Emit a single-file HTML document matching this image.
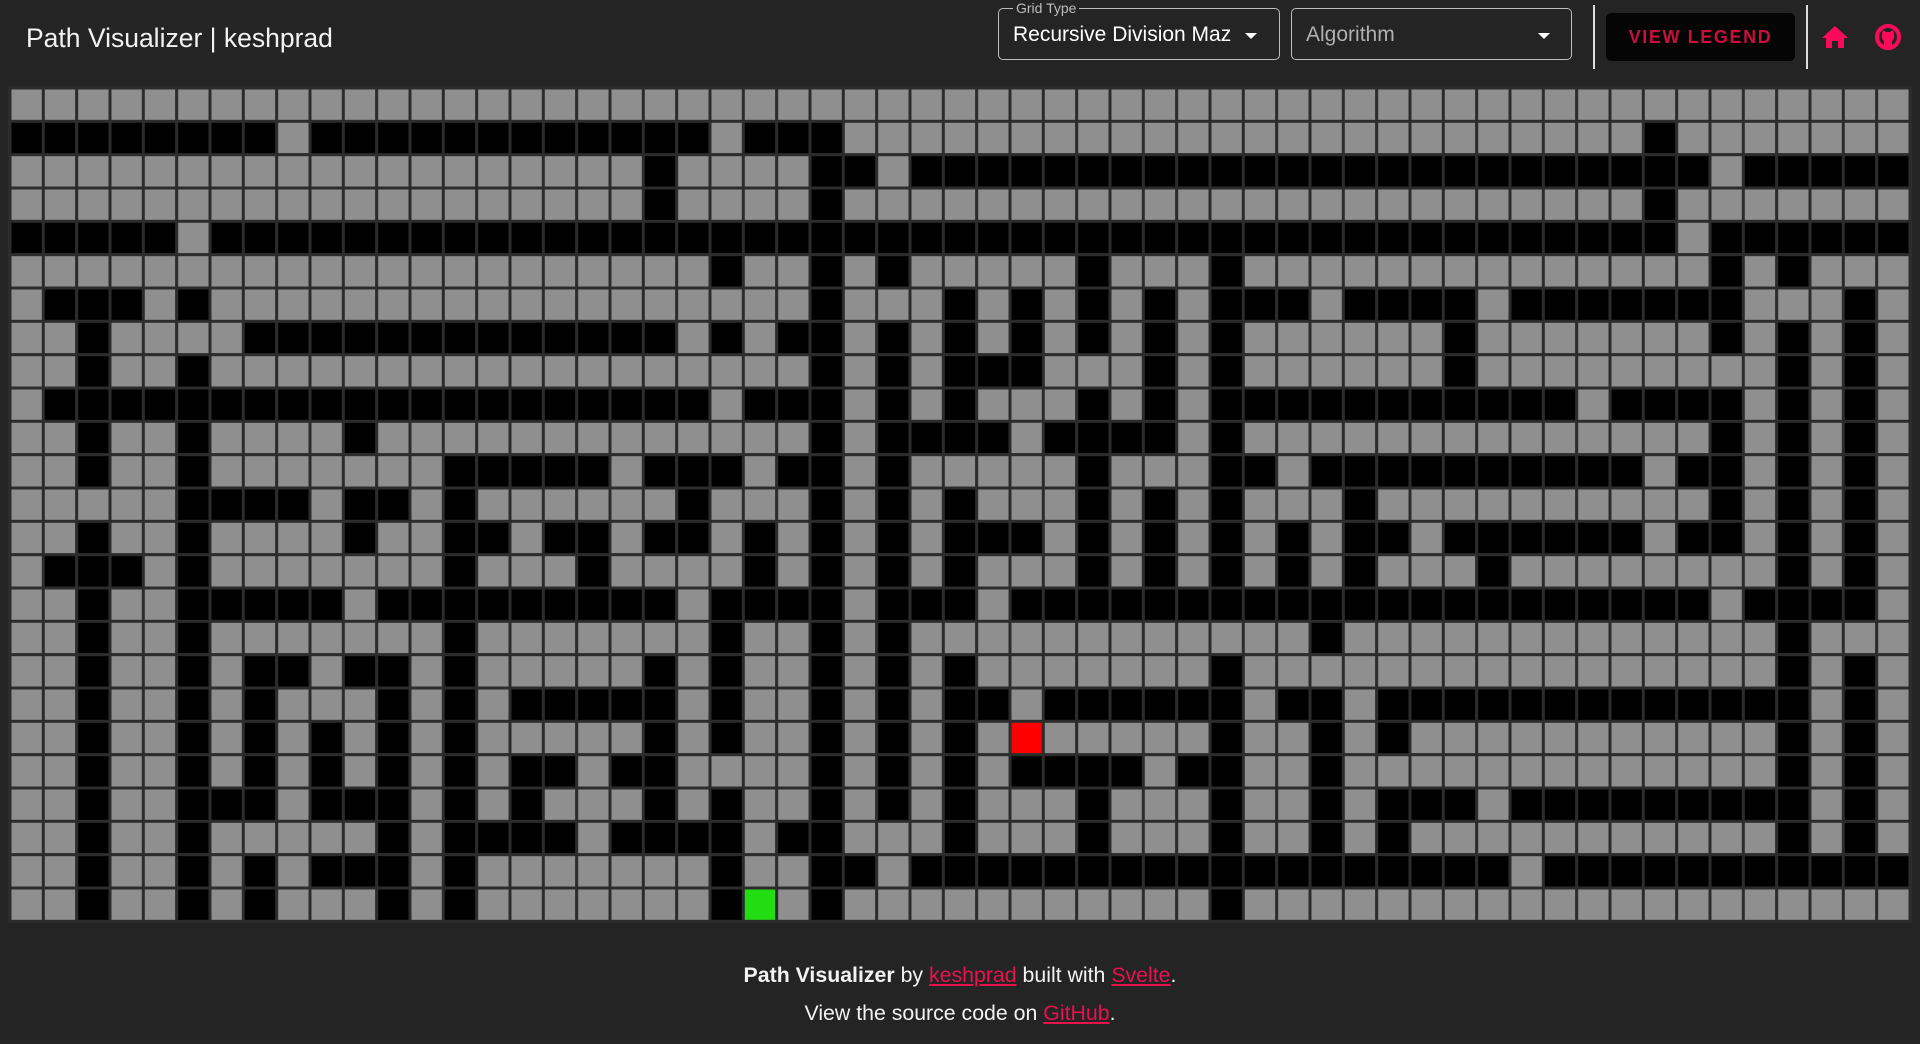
<!DOCTYPE html>
<html><head><meta charset="utf-8">
<style>
html,body{margin:0;padding:0;background:#242424;width:1920px;height:1044px;overflow:hidden;font-family:"Liberation Sans",Arial,sans-serif;color:#fff}
.title{position:absolute;left:26px;top:23px;font-size:26.5px;color:#f2f2f2}
.sel{position:absolute;top:8px;height:52px;border:1.5px solid #bdbdbd;border-radius:5px;box-sizing:border-box}
.sel .lab{position:absolute;left:14px;top:-9px;background:#242424;padding:0 3px;font-size:14px;color:#bdbdbd;line-height:16px}
.sel .val{position:absolute;left:14px;top:14px;font-size:21px;color:#fff;white-space:nowrap}
.tri{position:absolute;top:24px;width:0;height:0;border-left:6px solid transparent;border-right:6px solid transparent;border-top:6px solid #fff}
.div{position:absolute;top:5px;width:2px;height:64px;background:#ddd}
.btn{position:absolute;left:1606px;top:13px;width:189px;height:48px;background:#050505;border-radius:5px;color:#c8103e;font-weight:bold;font-size:18px;letter-spacing:1.6px;text-align:center;line-height:48px}
#grid{position:absolute;left:8px;top:86px}
.foot{position:absolute;left:0;width:1920px;text-align:center;font-size:21.3px;color:#f2f2f2}
.foot a{color:#e8124c;text-decoration:underline}
</style></head><body>
<div class="title">Path Visualizer | keshprad</div>
<div class="sel" style="left:998px;width:282px"><div class="lab">Grid Type</div><div class="val">Recursive Division Maz</div><div class="tri" style="left:246px"></div></div>
<div class="sel" style="left:1291px;width:281px"><div class="val" style="color:#b0b0b0">Algorithm</div><div class="tri" style="left:246px"></div></div>
<div class="div" style="left:1593px"></div>
<div class="btn">VIEW LEGEND</div>
<div class="div" style="left:1806px"></div>
<svg style="position:absolute;left:1820px;top:24px" width="30" height="26" viewBox="0 0 30 26"><path d="M15 2 L28 14 L24 14 L24 24 L18 24 L18 17 L12 17 L12 24 L6 24 L6 14 L2 14 Z" fill="#ff0a5a"/></svg>
<svg style="position:absolute;left:1873px;top:22px" width="30" height="30" viewBox="0 0 30 30"><circle cx="15" cy="15" r="11" fill="none" stroke="#ff0a5a" stroke-width="4"/><path d="M11 27 L11 19 Q8 17 9 12 L10 8 L13 10 L17 10 L20 8 L21 12 Q22 17 19 19 L19 27 Z" fill="#ff0a5a"/></svg>
<svg id="grid" width="1904" height="837"></svg>
<div class="foot" style="top:963px"><b>Path Visualizer</b> by <a>keshprad</a> built with <a>Svelte</a>.</div>
<div class="foot" style="top:1001px">View the source code on <a>GitHub</a>.</div>
<script>
var B=[
[],
[[0,7],[9,20],[22,24],[49,49]],
[[19,19],[24,25],[27,50],[52,56]],
[[19,19],[24,24],[49,49]],
[[0,4],[6,49],[51,56]],
[[21,21],[24,24],[26,26],[32,32],[36,36],[51,51],[53,53]],
[[1,3],[5,5],[24,24],[28,28],[30,30],[32,32],[34,34],[36,38],[40,43],[45,51],[55,55]],
[[2,2],[7,19],[21,21],[23,24],[26,26],[28,28],[30,30],[32,32],[34,34],[36,36],[43,43],[51,51],[53,53],[55,55]],
[[2,2],[5,5],[24,24],[26,26],[28,30],[34,34],[36,36],[43,43],[53,53],[55,55]],
[[1,20],[22,24],[26,26],[28,28],[32,32],[34,34],[36,46],[48,51],[53,53],[55,55]],
[[2,2],[5,5],[10,10],[24,24],[26,29],[31,34],[36,36],[51,51],[53,53],[55,55]],
[[2,2],[5,5],[13,17],[19,21],[23,24],[26,26],[32,32],[36,37],[39,48],[50,51],[53,53],[55,55]],
[[5,8],[10,11],[13,13],[20,20],[24,24],[26,26],[28,28],[32,32],[34,34],[36,36],[40,40],[51,51],[53,53],[55,55]],
[[2,2],[5,5],[10,10],[13,14],[16,17],[19,20],[22,22],[24,24],[26,26],[28,30],[32,32],[34,34],[36,36],[38,38],[40,41],[43,48],[50,51],[53,53],[55,55]],
[[1,3],[5,5],[13,13],[17,17],[22,22],[24,24],[26,26],[28,28],[32,32],[34,34],[36,36],[38,38],[40,40],[44,44],[53,53],[55,55]],
[[2,2],[5,9],[11,19],[21,24],[26,28],[30,50],[52,55]],
[[2,2],[5,5],[13,13],[21,21],[24,24],[26,26],[39,39],[53,53]],
[[2,2],[5,5],[7,8],[10,11],[13,13],[19,19],[21,21],[24,24],[26,26],[28,28],[36,36],[53,53],[55,55]],
[[2,2],[5,5],[7,7],[11,11],[13,13],[15,19],[21,21],[24,24],[26,26],[28,29],[31,36],[38,39],[41,53],[55,55]],
[[2,2],[5,5],[7,7],[9,9],[11,11],[13,13],[19,19],[21,21],[24,24],[26,26],[28,28],[36,36],[39,39],[41,41],[53,53],[55,55]],
[[2,2],[5,5],[7,7],[9,9],[11,11],[13,13],[15,16],[18,19],[24,24],[26,26],[28,28],[30,33],[35,36],[39,39],[53,53],[55,55]],
[[2,2],[5,7],[9,11],[13,13],[15,15],[19,19],[21,21],[24,24],[26,26],[28,28],[32,32],[36,36],[39,39],[41,43],[45,53],[55,55]],
[[2,2],[5,5],[11,11],[13,16],[18,21],[23,24],[28,28],[32,32],[36,36],[39,39],[41,41],[53,53],[55,55]],
[[2,2],[5,5],[7,7],[9,11],[13,13],[21,21],[24,25],[27,44],[46,56]],
[[2,2],[5,5],[7,7],[11,11],[13,13],[21,21],[24,24],[36,36]]
];
var s='<rect x="0" y="0" width="1904" height="837" fill="#2c2c2c"/>';
var P=1900/57;
for(var r=0;r<25;r++){for(var c=0;c<57;c++){var col='#8f8f8f';B[r].forEach(function(g){if(c>=g[0]&&c<=g[1])col='#000'});
if(r==19&&c==30)col='#ff0000';if(r==24&&c==22)col='#22dd11';
s+='<rect x="'+(2+c*P+1.5).toFixed(1)+'" y="'+(2+r*P+1.5).toFixed(1)+'" width="'+(P-3).toFixed(1)+'" height="'+(P-3).toFixed(1)+'" fill="'+col+'"/>';}}
document.getElementById('grid').innerHTML=s;
</script>
</body></html>
